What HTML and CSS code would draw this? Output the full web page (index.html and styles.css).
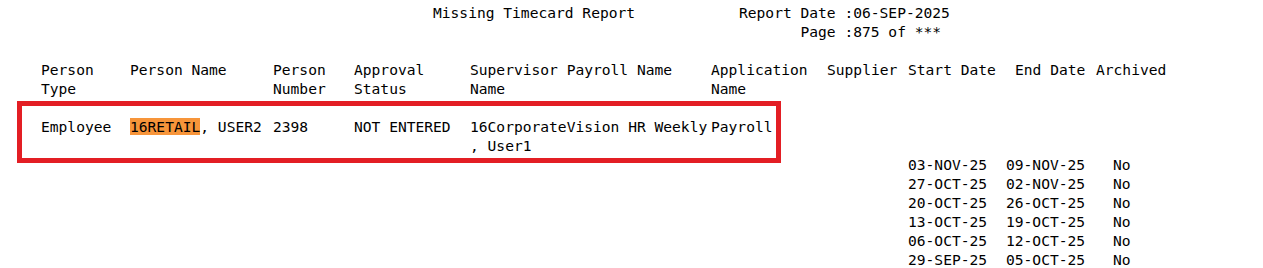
FILE: index.html
```html
<!DOCTYPE html>
<html lang="en">
<head>
<meta charset="utf-8">
<title>Missing Timecard Report</title>
<link rel="stylesheet" href="styles.css">
</head>
<body>
<div class="page">
  <header class="report-head">
    <div class="title">Missing Timecard Report</div>
    <div class="meta">
      <span class="meta-label">Report Date </span><span class="meta-value">:06-SEP-2025</span>
      <span class="meta-label">Page </span><span class="meta-value">:875 of ***</span>
    </div>
  </header>

  <div class="cols col-head">
    <div>Person<br>Type</div>
    <div>Person Name</div>
    <div>Person<br>Number</div>
    <div>Approval<br>Status</div>
    <div>Supervisor Payroll Name<br>Name</div>
    <div>Application<br>Name</div>
    <div>Supplier</div>
    <div>Start Date</div>
    <div>End Date</div>
    <div>Archived</div>
  </div>

  <div class="body-row">
    <div class="highlight-box">
      <div class="cols data-row">
        <div>Employee</div>
        <div><span class="mark">16RETAIL</span>, USER2</div>
        <div>2398</div>
        <div>NOT ENTERED</div>
        <div>16CorporateVision HR Weekly<br>, User1</div>
        <div>Payroll</div>
      </div>
    </div>
    <div class="periods">
      <div class="period"><span>03-NOV-25</span><span>09-NOV-25</span><span>No</span></div>
      <div class="period"><span>27-OCT-25</span><span>02-NOV-25</span><span>No</span></div>
      <div class="period"><span>20-OCT-25</span><span>26-OCT-25</span><span>No</span></div>
      <div class="period"><span>13-OCT-25</span><span>19-OCT-25</span><span>No</span></div>
      <div class="period"><span>06-OCT-25</span><span>12-OCT-25</span><span>No</span></div>
      <div class="period"><span>29-SEP-25</span><span>05-OCT-25</span><span>No</span></div>
    </div>
  </div>
</div>
</body>
</html>
```

FILE: styles.css
```css
html, body {
  margin: 0;
  padding: 0;
  background: #ffffff;
}

body {
  font-family: "DejaVu Sans Mono", "Liberation Mono", monospace;
  font-size: 14.6px;
  line-height: 19px;
  color: #000000;
  white-space: nowrap;
}

.page {
  padding-top: 3px;
}

.report-head {
  display: flex;
  align-items: flex-start;
  padding-left: 433px;
}

.title {
  width: 306px;
}

.meta {
  display: grid;
  grid-template-columns: auto auto;
}

.meta-label {
  justify-self: end;
  white-space: pre;
}

.cols {
  display: grid;
  grid-template-columns: 89px 143px 81px 116px 241px 116px 81px 107px 81px auto;
}

.col-head {
  margin-top: 19px;
  padding-left: 41px;
}

.body-row {
  display: flex;
  align-items: flex-start;
  margin-top: 3px;
}

.highlight-box {
  margin-left: 17px;
  border: 5px solid #e31e24;
  padding: 11px 0 3px 19px;
  box-sizing: border-box;
  width: 764px;
  height: 62px;
}

.data-row {
  grid-template-columns: 89px 143px 81px 116px 241px auto;
}

.mark {
  background: #f7953a;
}

.periods {
  margin-left: 127px;
  padding-top: 54px;
}

.period {
  display: grid;
  grid-template-columns: 98px 107px auto;
}
```
